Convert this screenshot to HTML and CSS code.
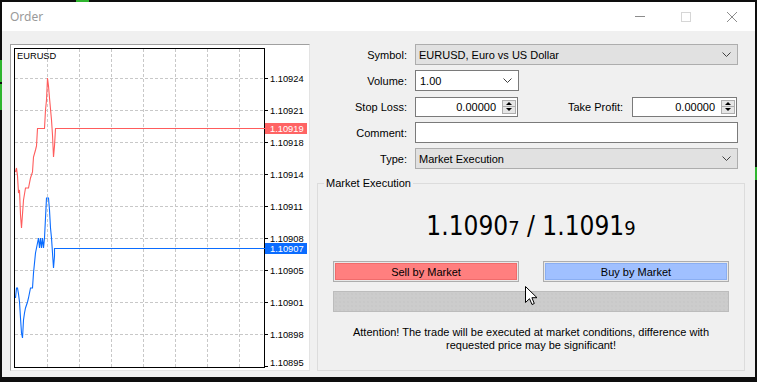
FILE: index.html
```html
<!DOCTYPE html>
<html lang="en">
<head>
    <meta charset="UTF-8">
    <meta name="viewport" content="width=device-width, initial-scale=1.0">
    <title>Order</title>
    <link rel="stylesheet" href="styles.css">
</head>
<body>
    <span class="desk-bit bit-top"></span>
    <span class="desk-bit bit-left1"></span>
    <span class="desk-bit bit-left2"></span>
    <span class="desk-bit bit-right"></span>

    <div class="window">
        <div class="titlebar">
            <span class="title">Order</span>
            <div class="caption">
                <span class="cap-btn">
                    <svg width="10" height="10" viewBox="0 0 10 10"><path d="M0 4.5H10" stroke="#8c8c8c"/></svg>
                </span>
                <span class="cap-btn">
                    <svg width="10" height="10" viewBox="0 0 10 10"><rect x="0.5" y="0.5" width="9" height="9" fill="none" stroke="#d6d6d6"/></svg>
                </span>
                <span class="cap-btn">
                    <svg width="10" height="10" viewBox="0 0 10 10"><path d="M0 0L10 10M10 0L0 10" stroke="#8c8c8c"/></svg>
                </span>
            </div>
        </div>

        <div class="content">
            <div class="chart-panel">
                <svg class="chart" width="298" height="325" viewBox="11 45 298 325">
                    <g stroke="#c8c8c8" stroke-dasharray="3 2" shape-rendering="crispEdges">
                        <path d="M47.5 49V367M79.5 49V367M111.5 49V367M143.5 49V367M175.5 49V367M207.5 49V367M239.5 49V367"/>
                        <path d="M15 78.5H264M15 110.5H264M15 142.5H264M15 174.5H264M15 206.5H264M15 238.5H264M15 270.5H264M15 302.5H264M15 334.5H264"/>
                    </g>
                    <path d="M14.5 48.5H264.5V367.5H14.5Z" fill="none" stroke="#000" shape-rendering="crispEdges"/>
                    <path d="M264 78.5H268M264 110.5H268M264 142.5H268M264 174.5H268M264 206.5H268M264 238.5H268M264 270.5H268M264 302.5H268M264 334.5H268M264 366.5H268" stroke="#000" shape-rendering="crispEdges"/>
                    <text class="symbol" x="17" y="59">EURUSD</text>
                    <g class="axis">
                        <text x="270" y="81.6">1.10924</text>
                        <text x="270" y="114">1.10921</text>
                        <text x="270" y="145.6">1.10918</text>
                        <text x="270" y="177.8">1.10914</text>
                        <text x="270" y="210">1.10911</text>
                        <text x="270" y="241.6">1.10908</text>
                        <text x="270" y="273.6">1.10905</text>
                        <text x="270" y="305.6">1.10901</text>
                        <text x="270" y="337.6">1.10898</text>
                        <text x="270" y="366.4">1.10895</text>
                    </g>
                    <polyline class="ask" points="15.5,172 16.5,168 17.5,176 18.5,193 19.5,190 20.5,215 21.5,228 22.5,214 23.5,200 25.5,188 28.5,188 30.5,178 32.5,172 33.5,157 35.5,150 36.5,146 37.5,128.5 44.5,128.5 45.5,110 46.5,100 47.5,78 48.5,86 49.5,98 51.5,120 52.5,135 53.5,157 54.5,146 55.5,128.5 265,128.5"/>
                    <polyline class="bid" points="15.5,298 16.5,288 17.5,288 18.5,294 19.5,302 20.5,318 21.5,333 22.5,338 23.5,320 24.5,313 25.5,308 27.5,302 28.5,298 30.5,288 32.5,288 33.5,273 34.5,263 35.5,253 36.5,248 37.5,243 38.5,238 39.5,248 40.5,238 41.5,248 42.5,238 43.5,248 44.5,238 46.5,198 48.5,198 49.5,210 50.5,228 51.5,238 52.5,253 53.5,268 54.5,256 54.5,248.5 265,248.5"/>
                    <rect x="265" y="123" width="42" height="11" fill="#ff6464"/>
                    <text class="tag" x="270" y="131.9">1.10919</text>
                    <rect x="265" y="243" width="42" height="11" fill="#0a6cff"/>
                    <text class="tag" x="270" y="251.9">1.10907</text>
                </svg>
            </div>

            <div class="order-form">
                <div class="form-grid">
                    <label>Symbol:</label>
                    <div class="combo">
                        <span>EURUSD, Euro vs US Dollar</span>
                        <svg width="9" height="5" viewBox="0 0 9 5"><path d="M0.5 0.5L4.5 4.5L8.5 0.5" fill="none" stroke="#404040"/></svg>
                    </div>

                    <label>Volume:</label>
                    <div class="combo combo-white">
                        <span>1.00</span>
                        <svg width="9" height="5" viewBox="0 0 9 5"><path d="M0.5 0.5L4.5 4.5L8.5 0.5" fill="none" stroke="#404040"/></svg>
                    </div>

                    <label>Stop Loss:</label>
                    <div class="sl-row">
                        <div class="spin">
                            <span class="spin-val">0.00000</span>
                            <span class="spin-btns"><span class="up"></span><span class="down"></span></span>
                        </div>
                        <span class="tp-label">Take Profit:</span>
                        <div class="spin spin-tp">
                            <span class="spin-val">0.00000</span>
                            <span class="spin-btns"><span class="up"></span><span class="down"></span></span>
                        </div>
                    </div>

                    <label>Comment:</label>
                    <div class="text-input"></div>

                    <label>Type:</label>
                    <div class="combo">
                        <span>Market Execution</span>
                        <svg width="9" height="5" viewBox="0 0 9 5"><path d="M0.5 0.5L4.5 4.5L8.5 0.5" fill="none" stroke="#404040"/></svg>
                    </div>
                </div>

                <div class="group">
                    <div class="group-title">Market Execution</div>
                    <div class="quote">1.1090<small>7</small> / 1.1091<small>9</small></div>
                    <div class="trade-buttons">
                        <button class="trade-btn sell"><span>Sell by Market</span></button>
                        <button class="trade-btn buy"><span>Buy by Market</span></button>
                    </div>
                    <div class="progress"></div>
                    <p class="notice">Attention! The trade will be executed at market conditions, difference with<br>requested price may be significant!</p>
                </div>
            </div>
        </div>

        <svg class="cursor" width="13" height="20" viewBox="0 0 13 20"><path d="M0.5 0.5V16.5L4.5 12.7L7 18.5L9.3 17.5L6.9 11.7H12Z" fill="#fff" stroke="#000"/></svg>
    </div>
</body>
</html>
```

FILE: styles.css
```css
body {
    margin: 0;
    width: 757px;
    height: 382px;
    overflow: hidden;
    position: relative;
    background-color: #0e0e0e;
    font-family: "Liberation Sans", Arial, sans-serif;
    font-size: 11px;
    color: #000;
}
.desk-bit {
    position: absolute;
    background-color: #2fb52f;
}
.bit-top {
    left: 76px;
    top: 0;
    width: 13px;
    height: 2px;
}
.bit-left1 {
    left: 0;
    top: 60px;
    width: 2px;
    height: 22px;
}
.bit-left2 {
    left: 0;
    top: 84px;
    width: 2px;
    height: 26px;
}
.bit-right {
    left: 755px;
    top: 167px;
    width: 2px;
    height: 13px;
}
.window {
    position: relative;
    margin: 2px 0 0 2px;
    width: 753px;
    height: 375px;
    background-color: #f0f0f0;
    display: flex;
    flex-direction: column;
}
.titlebar {
    height: 29px;
    background-color: #fff;
    display: flex;
    align-items: center;
    justify-content: space-between;
}
.title {
    padding-left: 8px;
    font-family: "Noto Sans", "Liberation Sans", sans-serif;
    font-size: 12px;
    color: #9a9a9a;
}
.caption {
    display: flex;
    height: 100%;
}
.cap-btn {
    width: 46px;
    display: flex;
    align-items: center;
    justify-content: center;
}
.cap-btn svg {
    display: block;
}
.content {
    flex: 1;
    display: flex;
    padding: 13px 10px 0 8px;
}
.chart-panel {
    width: 300px;
    height: 327px;
    box-sizing: border-box;
    border: 1px solid;
    border-color: #a0a0a0 #e3e3e3 #e3e3e3 #a0a0a0;
    background-color: #fff;
}
.chart {
    display: block;
}
.chart text {
    font-family: "Liberation Sans", Arial, sans-serif;
    font-size: 9.3px;
    fill: #000;
}
.chart .tag {
    fill: #fff;
}
.ask, .bid {
    fill: none;
    stroke-width: 1.1;
}
.ask {
    stroke: #ff5c5c;
}
.bid {
    stroke: #0a6cff;
}
.order-form {
    margin-left: 7px;
    width: 428px;
}
.form-grid {
    display: grid;
    grid-template-columns: 90px 323px;
    grid-auto-rows: 21px;
    column-gap: 8px;
    row-gap: 5px;
    align-items: center;
}
.form-grid label {
    text-align: right;
}
.combo {
    height: 21px;
    box-sizing: border-box;
    border: 1px solid #adadad;
    background-color: #e1e1e1;
    padding: 0 6px 0 3px;
    display: flex;
    align-items: center;
    justify-content: space-between;
}
.combo-white {
    width: 104px;
    background-color: #fff;
    border-color: #7a7a7a;
    padding-left: 4px;
}
.text-input {
    height: 21px;
    box-sizing: border-box;
    border: 1px solid #7a7a7a;
    background-color: #fff;
}
.sl-row {
    display: flex;
    align-items: center;
}
.spin {
    width: 103px;
    height: 20px;
    box-sizing: border-box;
    border: 1px solid #7a7a7a;
    background-color: #fff;
    padding-right: 1px;
    display: flex;
    align-items: center;
    justify-content: flex-end;
}
.spin-val {
    margin-right: 6px;
}
.spin-btns {
    width: 14px;
    height: 14px;
    box-sizing: border-box;
    border: 1px solid #adadad;
    background-color: #e6e6e6;
    display: flex;
    flex-direction: column;
}
.spin-btns span {
    flex: 1;
    display: flex;
    align-items: center;
    justify-content: center;
}
.spin-btns span + span {
    border-top: 1px solid #adadad;
}
.up::before {
    content: "";
    border: 3px solid transparent;
    border-top: 0;
    border-bottom-color: #000;
}
.down::before {
    content: "";
    border: 3px solid transparent;
    border-bottom: 0;
    border-top-color: #000;
}
.tp-label {
    margin-left: auto;
    margin-right: 9px;
}
.spin-tp {
    width: 105px;
    margin-right: 1px;
}
.group {
    margin-top: 14px;
    height: 188px;
    box-sizing: border-box;
    border: 1px solid #dcdcdc;
    padding: 0 15px;
}
.group-title {
    width: fit-content;
    margin: -7px 0 0 -9px;
    padding: 0 2px;
    line-height: 13px;
    background-color: #f0f0f0;
}
.quote {
    margin-top: 21px;
    text-align: center;
    font-family: "DejaVu Sans Condensed", "DejaVu Sans", sans-serif;
    font-size: 26px;
    line-height: 30px;
}
.quote small {
    font-size: 20px;
}
.trade-buttons {
    margin-top: 18px;
    display: flex;
    justify-content: space-between;
}
.trade-btn {
    width: 186px;
    height: 21px;
    box-sizing: border-box;
    margin: 0;
    padding: 1px;
    border: 1px solid #adadad;
    background-color: #e8e8e8;
    font: inherit;
    color: #000;
}
.trade-btn span {
    height: 100%;
    box-sizing: border-box;
    border: 1px solid;
    display: flex;
    align-items: center;
    justify-content: center;
}
.sell span {
    background-color: #ff7f7f;
    border-color: #f06b6b;
}
.buy span {
    background-color: #a0c0ff;
    border-color: #8aaef2;
}
.progress {
    margin-top: 9px;
    height: 21px;
    box-sizing: border-box;
    border: 1px solid #bcbcbc;
    background-color: #cccccc;
    background-image: radial-gradient(#c3c3c3 0.6px, transparent 0.8px);
    background-size: 4px 4px;
}
.notice {
    margin: 14px 0 0;
    text-align: center;
    line-height: 13px;
}
.cursor {
    position: absolute;
    left: 523px;
    top: 284px;
}
```
